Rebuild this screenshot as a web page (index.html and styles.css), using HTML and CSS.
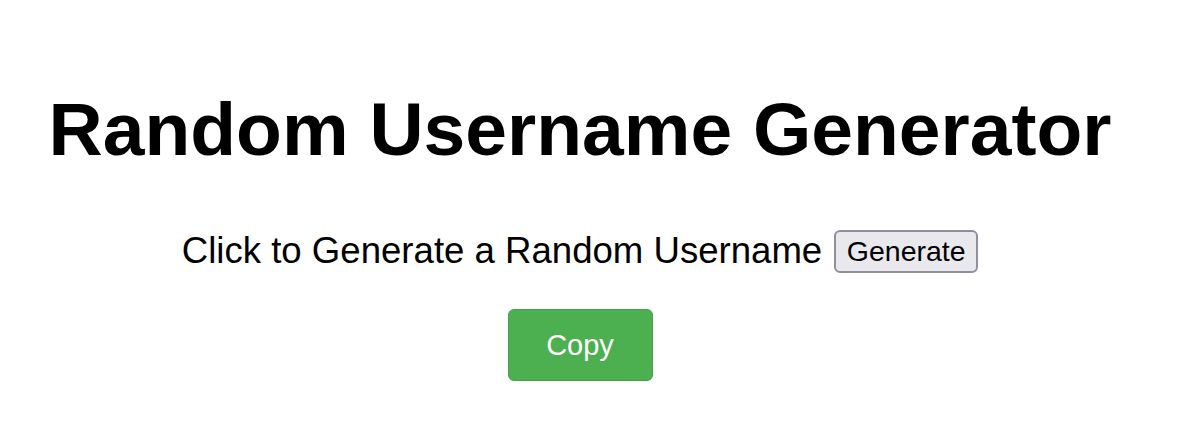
FILE: index.html
```html
<!DOCTYPE html>
<html lang="en">
<head>
    <meta charset="UTF-8">
    <meta name="viewport" content="width=device-width, initial-scale=1.0">
    <title>Random Username Generator</title>
    <link rel="stylesheet" href="styles.css">
</head>
<body>

<main class="page">
    <h1>Random Username Generator</h1>

    <div class="row">
        <span class="prompt">Click to Generate a Random Username</span>
        <button class="generate" type="button">Generate</button>
    </div>

    <button class="copy" type="button">Copy</button>
</main>

</body>
</html>
```

FILE: styles.css
```css
body {
    font-family: "Liberation Sans", Arial, sans-serif;
    margin: 0;
    padding: 0;
    background-color: #fff;
    color: #000;
}

.page {
    width: 1160px;
    display: flex;
    flex-direction: column;
    align-items: center;
}

h1 {
    font-size: 75px;
    font-weight: bold;
    margin: 86px 0 0;
    line-height: 86px;
}

.row {
    display: flex;
    align-items: center;
    justify-content: center;
    gap: 12px;
    margin-top: 56px;
}

.prompt {
    font-size: 36.6px;
}

.generate {
    font-family: "Liberation Sans", Arial, sans-serif;
    font-size: 28.5px;
    color: #000;
    background-color: #e9e9ed;
    border: 2px solid #8f8f9d;
    border-radius: 6px;
    width: 144px;
    height: 43px;
    padding: 0;
    margin-top: 2px;
}

.copy {
    font-family: "Liberation Sans", Arial, sans-serif;
    font-size: 29px;
    color: white;
    background-color: #4CAF50;
    border: 1px solid #45a049;
    border-radius: 6px;
    width: 145px;
    height: 72px;
    margin-top: 36px;
    cursor: pointer;
}
```
